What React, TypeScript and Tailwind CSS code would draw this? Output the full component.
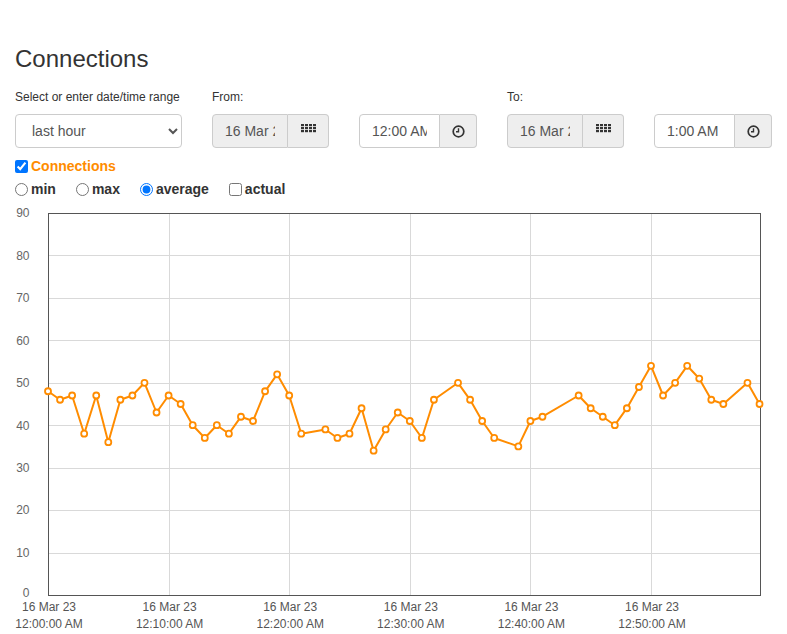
import React from "react";

const DATA: [number, number][] = [
  [0, 48], [1, 46], [2, 47], [3, 38], [4, 47], [5, 36], [6, 46], [7, 47], [8, 50], [9, 43],
  [10, 47], [11, 45], [12, 40], [13, 37], [14, 40], [15, 38], [16, 42], [17, 41], [18, 48], [19, 52],
  [20, 47], [21, 38], [23, 39], [24, 37], [25, 38], [26, 44], [27, 34], [28, 39], [29, 43],
  [30, 41], [31, 37], [32, 46], [34, 50], [35, 46], [36, 41], [37, 37], [39, 35],
  [40, 41], [41, 42], [44, 47], [45, 44], [46, 42], [47, 40], [48, 44], [49, 49],
  [50, 54], [51, 47], [52, 50], [53, 54], [54, 51], [55, 46], [56, 45], [58, 50], [59, 45],
];

const X0 = 48;
const PX_MIN = 12.06;
const TOP = 12;
const BOTTOM = 394;
const PER_UNIT = (BOTTOM - TOP) / 90;
const RIGHT = 760;

const xOf = (m: number) => X0 + m * PX_MIN;
const yOf = (v: number) => BOTTOM - v * PER_UNIT;

function GridIcon() {
  const rects = [];
  for (let r = 0; r < 3; r++) {
    for (let c = 0; c < 4; c++) {
      rects.push(<rect key={`${r}-${c}`} x={c * 4} y={r * 3} width={3} height={2.2} fill="#333" />);
    }
  }
  return (
    <svg width="15" height="8.5" viewBox="0 0 15 8.5" className="block -mt-[5px]">
      {rects}
    </svg>
  );
}

function ClockIcon() {
  return (
    <svg width="13" height="13" viewBox="0 0 13 13" className="block">
      <circle cx="6.5" cy="6.5" r="5.3" fill="none" stroke="#333" strokeWidth="1.7" />
      <path d="M6.5 3.2 V6.7 H4" fill="none" stroke="#333" strokeWidth="1.4" />
    </svg>
  );
}

function DateGroup() {
  return (
    <div className="flex h-[34px] w-[117px]">
      <input
        readOnly
        value="16 Mar 2023"
        className="w-[76px] min-w-0 border border-[#ccc] rounded-l-[4px] bg-[#eee] px-3 text-[14px] text-[#555] outline-none"
      />
      <div className="w-[41px] border border-l-0 border-[#ccc] rounded-r-[4px] bg-[#eee] flex items-center justify-center">
        <GridIcon />
      </div>
    </div>
  );
}

function TimeGroup({ value }: { value: string }) {
  return (
    <div className="flex h-[34px] w-[118px]">
      <input
        readOnly
        value={value}
        className="w-[81px] min-w-0 border border-[#ccc] rounded-l-[4px] bg-white px-3 text-[14px] text-[#555] outline-none"
      />
      <div className="w-[37px] border border-l-0 border-[#ccc] rounded-r-[4px] bg-[#eee] flex items-center justify-center">
        <ClockIcon />
      </div>
    </div>
  );
}

function Chart() {
  const yTicks = [0, 10, 20, 30, 40, 50, 60, 70, 80, 90];
  const xTicks = [0, 1, 2, 3, 4, 5];
  const times = ["12:00:00 AM", "12:10:00 AM", "12:20:00 AM", "12:30:00 AM", "12:40:00 AM", "12:50:00 AM"];
  const pts = DATA.map(([m, v]) => `${xOf(m).toFixed(1)},${yOf(v).toFixed(1)}`).join(" ");
  return (
    <svg width="787" height="431" viewBox="0 0 787 431" className="block mt-[2px]" style={{ fontFamily: "'Liberation Sans', Arial, sans-serif" }}>
      {yTicks.slice(1, -1).map((v) => (
        <line key={v} x1={X0} x2={RIGHT} y1={Math.round(yOf(v)) + 0.5} y2={Math.round(yOf(v)) + 0.5} stroke="#d9d9d9" strokeWidth="1" />
      ))}
      {xTicks.slice(1).map((k) => (
        <line key={k} x1={Math.round(xOf(k * 10)) + 0.5} x2={Math.round(xOf(k * 10)) + 0.5} y1={TOP} y2={BOTTOM} stroke="#d9d9d9" strokeWidth="1" />
      ))}
      <rect x={X0 + 0.5} y={TOP + 0.5} width={RIGHT - X0} height={BOTTOM - TOP} fill="none" stroke="#555" strokeWidth="1" />
      {yTicks.map((v) => (
        <text key={v} x={29.5} y={v === 0 ? yOf(v) + 1.8 : yOf(v) + 4.3} textAnchor="end" fontSize="12" fill="#666">
          {v}
        </text>
      ))}
      {xTicks.map((k) => (
        <g key={k}>
          <text x={xOf(k * 10) + 1} y={409.7} textAnchor="middle" fontSize="12" fill="#555">
            16 Mar 23
          </text>
          <text x={xOf(k * 10) + 1} y={427} textAnchor="middle" fontSize="12" fill="#555">
            {times[k]}
          </text>
        </g>
      ))}
      <polyline points={pts} fill="none" stroke="#ff8c00" strokeWidth="2" strokeLinejoin="round" />
      {DATA.map(([m, v]) => (
        <circle key={m} cx={xOf(m)} cy={yOf(v)} r="3" fill="#fff" stroke="#ff8c00" strokeWidth="1.8" />
      ))}
    </svg>
  );
}

export default function App() {
  return (
    <div className="w-[787px] h-[634px] overflow-hidden bg-white font-['Liberation_Sans',Arial,sans-serif] text-[#333]">
      <div className="px-[15px] pt-[46px]">
        <h1 className="text-[24px] leading-[26px] font-normal m-0">Connections</h1>
        <div className="mt-[17px] flex gap-[30px]">
          <div className="w-[167px]">
            <div className="text-[12px] leading-[17px] h-[17px] mb-[8px]">Select or enter date/time range</div>
            <select
              defaultValue="last hour"
              className="w-full h-[34px] border border-[#ccc] rounded-[4px] bg-white px-3 text-[14px] text-[#555] outline-none"
            >
              <option>last hour</option>
              <option>last day</option>
              <option>last week</option>
            </select>
          </div>
          <div>
            <div className="text-[12px] leading-[17px] h-[17px] mb-[8px]">From:</div>
            <DateGroup />
          </div>
          <div>
            <div className="text-[12px] leading-[17px] h-[17px] mb-[8px]"></div>
            <TimeGroup value="12:00 AM" />
          </div>
          <div>
            <div className="text-[12px] leading-[17px] h-[17px] mb-[8px]">To:</div>
            <DateGroup />
          </div>
          <div>
            <div className="text-[12px] leading-[17px] h-[17px] mb-[8px]"></div>
            <TimeGroup value="1:00 AM" />
          </div>
        </div>
        <label className="mt-[8px] flex items-center h-[20px] text-[14px] font-bold text-[#ff8c00]">
          <input type="checkbox" defaultChecked className="m-0 mr-[3px] w-[13px] h-[13px]" />
          Connections
        </label>
        <div className="mt-[3px] flex items-center gap-[20px] h-[20px] text-[14px] font-bold text-[#333]">
          <label className="flex items-center">
            <input type="radio" name="agg" className="m-0 mr-[3px] w-[13px] h-[13px]" />
            min
          </label>
          <label className="flex items-center">
            <input type="radio" name="agg" className="m-0 mr-[3px] w-[13px] h-[13px]" />
            max
          </label>
          <label className="flex items-center">
            <input type="radio" name="agg" defaultChecked className="m-0 mr-[3px] w-[13px] h-[13px]" />
            average
          </label>
          <label className="flex items-center">
            <input type="checkbox" className="m-0 mr-[3px] w-[13px] h-[13px]" />
            actual
          </label>
        </div>
      </div>
      <Chart />
    </div>
  );
}
